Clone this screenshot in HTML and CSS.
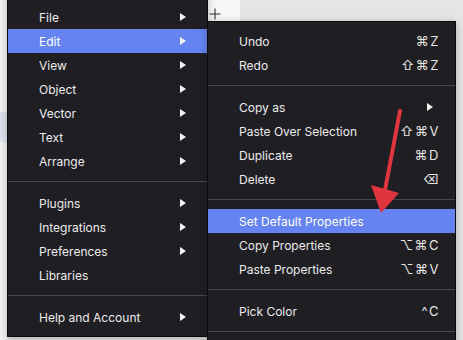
FILE: index.html
```html
<!DOCTYPE html>
<html lang="en">
<head>
  <meta charset="UTF-8">
  <title>Edit menu</title>
  <link rel="stylesheet" href="styles.css">
</head>
<body>
  <div class="canvas">
    <div class="tab-strip">
      <svg class="plus" viewBox="0 0 12 12"><path d="M6 0.5v11M0.5 6h11" stroke="#2e2e30" stroke-width="1.1"/></svg>
    </div>
    <div class="side-band"></div>

    <!-- main menu -->
    <ul class="menu main-menu">
      <li class="item"><span>File</span><span class="caret"></span></li>
      <li class="item active"><span>Edit</span><span class="caret"></span></li>
      <li class="item"><span>View</span><span class="caret"></span></li>
      <li class="item"><span>Object</span><span class="caret"></span></li>
      <li class="item"><span>Vector</span><span class="caret"></span></li>
      <li class="item"><span>Text</span><span class="caret"></span></li>
      <li class="item"><span>Arrange</span><span class="caret"></span></li>
      <li class="sep"></li>
      <li class="item"><span>Plugins</span><span class="caret"></span></li>
      <li class="item"><span>Integrations</span><span class="caret"></span></li>
      <li class="item"><span>Preferences</span><span class="caret"></span></li>
      <li class="item"><span>Libraries</span></li>
      <li class="sep"></li>
      <li class="item"><span>Help and Account</span><span class="caret"></span></li>
    </ul>

    <!-- edit submenu -->
    <ul class="menu sub-menu">
      <li class="item"><span>Undo</span><span class="key">⌘Z</span></li>
      <li class="item"><span>Redo</span><span class="key">⇧⌘Z</span></li>
      <li class="sep"></li>
      <li class="item"><span>Copy as</span><span class="caret"></span></li>
      <li class="item"><span>Paste Over Selection</span><span class="key">⇧⌘V</span></li>
      <li class="item"><span>Duplicate</span><span class="key">⌘D</span></li>
      <li class="item"><span>Delete</span><span class="key">⌫</span></li>
      <li class="sep"></li>
      <li class="item active"><span>Set Default Properties</span></li>
      <li class="item"><span>Copy Properties</span><span class="key">⌥⌘C</span></li>
      <li class="item"><span>Paste Properties</span><span class="key">⌥⌘V</span></li>
      <li class="sep"></li>
      <li class="item"><span>Pick Color</span><span class="key">^C</span></li>
      <li class="sep"></li>
    </ul>

    <!-- annotation arrow -->
    <svg class="arrow" viewBox="0 0 463 340">
      <line x1="400" y1="111" x2="385" y2="190" stroke="#e0343f" stroke-width="4" stroke-linecap="round"/>
      <polygon points="371,185 399,193 381,213" fill="#e0343f"/>
    </svg>
  </div>
</body>
</html>
```

FILE: styles.css
```css
* {
  box-sizing: border-box;
  margin: 0;
  padding: 0;
}
body {
  width: 463px;
  height: 340px;
  overflow: hidden;
  background: #e5e5e7;
  font-family: Inter, "Liberation Sans", sans-serif;
}
.canvas {
  position: relative;
  width: 463px;
  height: 340px;
}
.tab-strip {
  position: absolute;
  left: 200px;
  top: 0;
  width: 40px;
  height: 22px;
  background: #f7f7f7;
}
.plus {
  position: absolute;
  left: 9px;
  top: 8px;
  width: 12px;
  height: 12px;
}
.side-band {
  position: absolute;
  left: 0;
  top: 0;
  width: 8px;
  height: 340px;
  background: #f3f3f4;
}
.side-band::after {
  content: "";
  position: absolute;
  left: 0;
  top: 112px;
  width: 8px;
  height: 30px;
  background: #dde4ef;
}
.menu {
  position: absolute;
  list-style: none;
  background: #1f1e22;
  border: 1px solid #0b0b0c;
  color: #ececec;
  font-size: 12px;
  box-shadow: 0 2px 8px rgba(0, 0, 0, 0.25);
}
.main-menu {
  left: 7px;
  top: -8px;
  width: 201px;
  height: 345px;
  padding-top: 12px;
}
.sub-menu {
  left: 207px;
  top: 21px;
  width: 249px;
  height: 330px;
  padding-top: 7px;
}
.item {
  display: flex;
  align-items: center;
  justify-content: space-between;
  height: 24px;
  padding: 0 16px 0 31px;
  white-space: nowrap;
}
.main-menu .item {
  padding-right: 19px;
}
.item.active {
  background: #6584f2;
  color: #fff;
}
.caret {
  width: 0;
  height: 0;
  border-top: 4.5px solid transparent;
  border-bottom: 4.5px solid transparent;
  border-left: 6px solid #f2f2f2;
  margin-right: 2px;
}
.sub-menu .caret {
  margin-right: 6px;
}
.key {
  letter-spacing: 1.5px;
  margin-right: -1px;
  color: #e6e6e6;
  font-size: 13px;
}
.sep {
  height: 1px;
  background: #47464a;
  margin: 8px 0 9px;
}
.arrow {
  position: absolute;
  left: 0;
  top: 0;
  width: 463px;
  height: 340px;
}
```
